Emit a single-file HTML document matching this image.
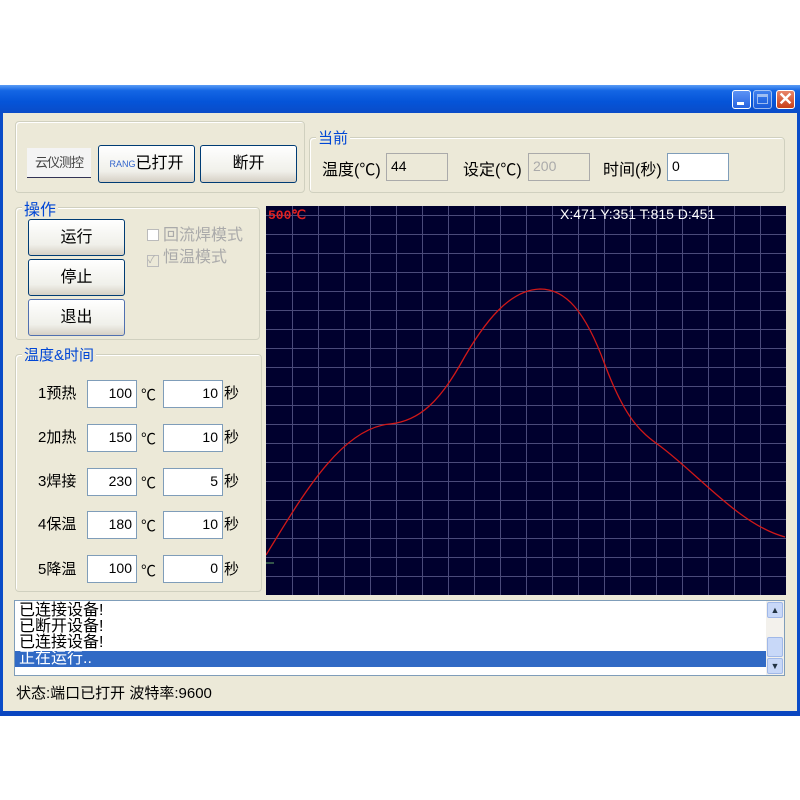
<!DOCTYPE html>
<html><head><meta charset="utf-8"><style>
*{margin:0;padding:0;box-sizing:border-box}
body{width:800px;height:800px;background:#fff;position:relative;overflow:hidden;font-family:"Liberation Sans","Noto Sans CJK SC",sans-serif;font-size:15px;color:#000}
.a{position:absolute}
.title{left:0;top:85px;width:800px;height:28px;background:linear-gradient(#5a9cf5,#1466e4 20%,#0554d8 60%,#0a4cc8);}
.win{left:0;top:113px;width:800px;height:600px;background:#ece9d8;border-left:3px solid #0a4cc8;border-right:3px solid #0a4cc8}
.bot{left:0;top:711px;width:800px;height:5px;background:#0a46c0}
.grp{border:1px solid #d0d0bf;border-radius:4px;box-shadow:inset 1px 1px 0 #fff}
.gl{background:#ece9d8;color:#0046d5;font-size:15px;padding:0 2px}
.btn{border:1px solid #003c74;border-radius:3px;background:linear-gradient(#fff,#f0f0ea 70%,#d6d0c5);text-align:center;font-size:16px}
.in{background:#fff;border:1px solid #7f9db9;font-size:14px;padding:0 4px;line-height:24px}
.dis{background:#ece9d8;border:1px solid #aaa;color:#aaa}
.tb{top:90px;width:19px;height:19px;border:1px solid #fff;border-radius:3px;background:linear-gradient(#5d93f5,#2663e0)}
</style></head><body>
<div class="a title"></div>
<div class="a tb" style="left:732px"><div class="a" style="left:4px;top:11px;width:7px;height:3px;background:#fff"></div></div>
<div class="a tb" style="left:753px;opacity:.6"><div class="a" style="left:3px;top:3px;width:11px;height:10px;border:1px solid #fff;border-top-width:3px"></div></div>
<div class="a tb" style="left:776px;background:linear-gradient(#e8856a,#c8401a);color:#fff;font-size:18px;line-height:17px;text-align:center;font-weight:bold">✕</div>
<div class="a win"></div>
<div class="a bot"></div>

<div class="a grp" style="left:15px;top:121px;width:290px;height:72px"></div>
<div class="a" style="left:27px;top:148px;width:64px;height:30px;background:#f4f4f4;border-bottom:1px solid #335;font-size:13px;color:#444;line-height:30px;text-align:center;letter-spacing:-1px">云仪测控</div>
<div class="a btn" style="left:98px;top:145px;width:97px;height:38px;line-height:36px"><span style="color:#36c;font-size:9px;vertical-align:top">RANG</span>已打开</div>
<div class="a btn" style="left:200px;top:145px;width:97px;height:38px;line-height:36px">断开</div>

<div class="a grp" style="left:309px;top:137px;width:476px;height:56px"></div>
<div class="a gl" style="left:316px;top:127px">当前</div>
<div class="a" style="left:322px;top:156px;font-size:16px">温度(℃)</div>
<div class="a in dis" style="left:386px;top:153px;width:62px;height:28px;color:#000">44</div>
<div class="a" style="left:463px;top:156px;font-size:16px">设定(℃)</div>
<div class="a in dis" style="left:528px;top:153px;width:62px;height:28px">200</div>
<div class="a" style="left:603px;top:156px;font-size:16px">时间(秒)</div>
<div class="a in" style="left:667px;top:153px;width:62px;height:28px">0</div>

<div class="a grp" style="left:15px;top:207px;width:245px;height:133px"></div>
<div class="a gl" style="left:22px;top:196px;font-size:16px">操作</div>
<div class="a btn" style="left:28px;top:219px;width:97px;height:37px;line-height:35px">运行</div>
<div class="a btn" style="left:28px;top:259px;width:97px;height:37px;line-height:35px">停止</div>
<div class="a btn" style="left:28px;top:299px;width:97px;height:37px;line-height:35px;border-color:#5070b0">退出</div>
<div class="a" style="left:147px;top:221px;color:#aaa;font-size:16px"><span style="display:inline-block;width:12px;height:12px;border:1px solid #bbb;vertical-align:-1px;margin-right:4px;background:#fff"></span>回流焊模式</div>
<div class="a" style="left:147px;top:243px;color:#aaa;font-size:16px"><span style="display:inline-block;width:12px;height:12px;border:1px solid #bbb;vertical-align:-1px;margin-right:4px;font-size:10px;line-height:10px">✓</span>恒温模式</div>

<div class="a grp" style="left:15px;top:354px;width:247px;height:238px"></div>
<div class="a gl" style="left:22px;top:344px">温度&amp;时间</div>
<div class="a" style="left:38px;top:383px;line-height:22px;font-size:15px">
<div style="height:44px">1预热</div><div style="height:44px">2加热</div><div style="height:43px">3焊接</div><div style="height:45px">4保温</div><div>5降温</div></div>
<div class="a in" style="left:87px;top:380px;width:50px;height:28px;text-align:right">100</div>
<div class="a in" style="left:87px;top:424px;width:50px;height:28px;text-align:right">150</div>
<div class="a in" style="left:87px;top:468px;width:50px;height:28px;text-align:right">230</div>
<div class="a in" style="left:87px;top:511px;width:50px;height:28px;text-align:right">180</div>
<div class="a in" style="left:87px;top:555px;width:50px;height:28px;text-align:right">100</div>
<div class="a" style="left:141px;top:385px;line-height:22px"><div style="height:44px">℃</div><div style="height:44px">℃</div><div style="height:43px">℃</div><div style="height:45px">℃</div><div>℃</div></div>
<div class="a in" style="left:163px;top:380px;width:60px;height:28px;text-align:right">10</div>
<div class="a in" style="left:163px;top:424px;width:60px;height:28px;text-align:right">10</div>
<div class="a in" style="left:163px;top:468px;width:60px;height:28px;text-align:right">5</div>
<div class="a in" style="left:163px;top:511px;width:60px;height:28px;text-align:right">10</div>
<div class="a in" style="left:163px;top:555px;width:60px;height:28px;text-align:right">0</div>
<div class="a" style="left:224px;top:383px;line-height:22px"><div style="height:44px">秒</div><div style="height:44px">秒</div><div style="height:43px">秒</div><div style="height:45px">秒</div><div>秒</div></div>

<svg class="a" style="left:266px;top:206px" width="520" height="389" viewBox="266 206 520 389">
<rect x="266" y="206" width="520" height="389" fill="#00002e"/>
<g stroke="#4a4a7a" stroke-width="1">
<path d="M292.5 206V595M318.5 206V595M344.5 206V595M370.5 206V595M396.5 206V595M422.5 206V595M448.5 206V595M474.5 206V595M500.5 206V595M526.5 206V595M552.5 206V595M578.5 206V595M604.5 206V595M630.5 206V595M656.5 206V595M682.5 206V595M708.5 206V595M734.5 206V595M760.5 206V595"/>
<path d="M266 215.5H786M266 234.5H786M266 253.5H786M266 272.5H786M266 291.5H786M266 310.5H786M266 329.5H786M266 348.5H786M266 367.5H786M266 386.5H786M266 405.5H786M266 424.5H786M266 443.5H786M266 462.5H786M266 481.5H786M266 500.5H786M266 519.5H786M266 538.5H786M266 557.5H786M266 576.5H786"/>
</g>
<path d="M266 555 C300 500 340 428 390 424 C420 421 440 400 460 365 C485 320 510 290 540 289 C565 289 585 310 605 365 C625 418 640 432 660 446 C700 476 740 525 785 537" fill="none" stroke="#d01818" stroke-width="1.3"/>
<line x1="266" y1="563" x2="274" y2="563" stroke="#6a6"/>
<text x="268" y="219" fill="#e02020" font-size="13" font-weight="bold" font-family="Liberation Mono,monospace">500℃</text>
<text x="560" y="219" fill="#fff" font-size="14" font-family="Liberation Sans,sans-serif">X:471 Y:351 T:815 D:451</text>
</svg>

<div class="a" style="left:14px;top:600px;width:771px;height:76px;background:#fff;border:1px solid #7f9db9;overflow:hidden;font-size:16px;line-height:16px">
<div style="padding-left:4px;margin-top:2px">已连接设备!</div>
<div style="padding-left:4px">已断开设备!</div>
<div style="padding-left:4px">已连接设备!</div>
<div style="padding-left:4px;background:#316ac5;color:#fff;width:752px">正在运行..</div>
</div>
<div class="a" style="left:766px;top:601px;width:18px;height:74px;background:#f3f1ec">
<div class="a" style="left:1px;top:1px;width:16px;height:16px;border:1px solid #a0b8e8;border-radius:2px;background:#c8d8f8;font-size:9px;text-align:center;line-height:14px;color:#234">▲</div>
<div class="a" style="left:1px;top:36px;width:16px;height:20px;border:1px solid #a0b8e8;border-radius:2px;background:#c8d8f8"></div>
<div class="a" style="left:1px;top:57px;width:16px;height:16px;border:1px solid #a0b8e8;border-radius:2px;background:#c8d8f8;font-size:9px;text-align:center;line-height:14px;color:#234">▼</div>
</div>
<div class="a" style="left:16px;top:682px;font-size:15px">状态:端口已打开 波特率:9600</div>
</body></html>
